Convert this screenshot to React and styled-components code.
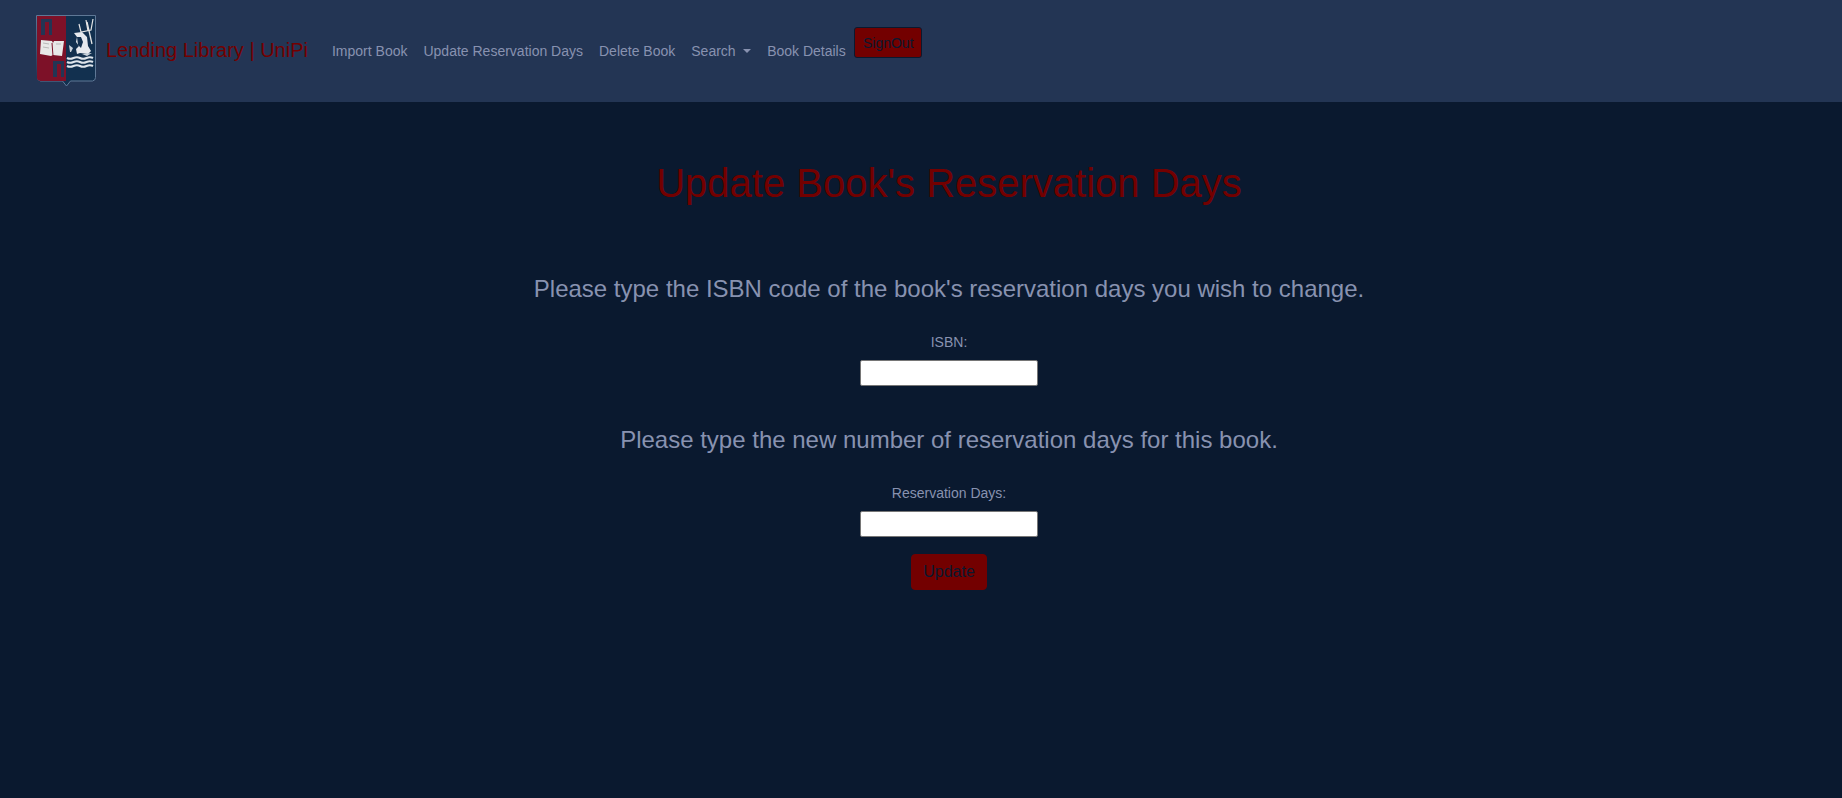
import React from 'react';
import styled, { createGlobalStyle } from 'styled-components';

const Global = createGlobalStyle`
html, body { margin: 0; padding: 0; background: #0a192f; }
body { font-family: "Liberation Sans", Arial, sans-serif; }
* { box-sizing: border-box; }
`;

const Page = styled.div`
min-height: 798px;
background: #0a192f;
`;

const Nav = styled.nav`
display: flex;
align-items: flex-start;
height: 102px;
padding: 15px 0 0 36px;
background: #233554;
`;

const Brand = styled.a`
display: flex;
align-items: center;
height: 70px;
gap: 10px;
margin-right: 16px;
color: #730000;
font-size: 20px;
white-space: nowrap;
`;

const CrestSvg = styled.svg`
align-self: flex-start;
flex: none;
`;

const Links = styled.ul`
display: flex;
list-style: none;
margin: 0;
padding: 0;
`;

const LinkItem = styled.li`
margin-top: 26px;
padding: 0 8px;
color: #8892b0;
font-size: 14px;
line-height: 21px;
white-space: nowrap;
`;

const Caret = styled.span`
display: inline-block;
margin-left: 7.5px;
vertical-align: 3px;
border-top: 4px solid #8892b0;
border-left: 4px solid transparent;
border-right: 4px solid transparent;
`;

const SignOut = styled.button`
width: 68px;
height: 31px;
margin: 12px 0 0 0.5px;
padding: 0;
background: #730000;
border: 1px solid #0a192f;
border-radius: 3px;
color: #0a192f;
font-family: inherit;
font-size: 14px;
`;

const Main = styled.main`
display: flex;
flex-direction: column;
align-items: center;
padding: 57px 0 0 56px;
`;

const Title = styled.h1`
margin: 0;
color: #730000;
font-size: 40px;
font-weight: 400;
line-height: 48px;
`;

const Prompt = styled.h4`
margin: ${(p) => p.$top}px 0 0;
color: #8892b0;
font-size: 24px;
font-weight: 400;
line-height: 29px;
`;

const Field = styled.label`
display: flex;
flex-direction: column;
align-items: center;
margin-top: 29px;
color: #8892b0;
font-size: 14px;
line-height: 21px;
`;

const Input = styled.input`
display: block;
width: 178px;
height: 26px;
margin-top: 7px;
padding: 1px 2px;
background: #fff;
border: 1px solid #767676;
border-radius: 2px;
`;

const Update = styled.button`
width: 76px;
height: 36px;
margin-top: 17px;
padding: 0;
background: #730000;
border: 1px solid #730000;
border-radius: 4px;
color: #0a192f;
font-family: inherit;
font-size: 16px;
`;

function Crest() {
  return (
    <CrestSvg width="60" height="72" viewBox="0 0 60 72">
      <path d="M.5.500h59v62q0 3-3 3.500h-22l-4 5-4-5h-22q-3-.5-3-3.500z" fill="#12304f" stroke="#5f7896" />
      <path d="M1 1h29v65h-25q-4-.5-4-3z" fill="#7d1128" />
      <path d="M5 4h11v16h-3v-13h-4v13h-4z" fill="#233554" />
      <path d="M17 46h11v16h-3v-13h-4v13h-4z" fill="#233554" />
      <path d="M5 25l11 1 1 2 1-2 10 0-2 15-9-1-2 1-11-2z" fill="#e8e8e8" />
      <path d="M16 28l1 13" stroke="#7d1128" fill="none" />
      <path d="M7 28l6 1M7 32l6 1M20 29l5 0" stroke="#b9b9b9" fill="none" />
      <path d="M51 7l5 22" stroke="#e6e6e6" strokeWidth="1.300" fill="none" />
      <path d="M43 9l2 8 10-2 2-11M50 5l2 11" stroke="#e6e6e6" strokeWidth="1.200" fill="none" />
      <path d="M38 18l8-1 5 5 1 9 3 5-3 3-8-1-3 1-1-5 3-3-3-4 1-5z" fill="#e6e9ee" />
      <path d="M41 22l4 0 2 5-2 6-3-3z" fill="#12304f" />
      <path d="M33 30l4 3-2 4-1 0zM46 39l10-1-5 3z" fill="#c9d2dc" />
      <path d="M31 43q3 1.500 6.500 0t6.500 0 6.500 0 6.500 0M31 47q3 1.500 6.500 0t6.500 0 6.500 0 6.500 0M31 51q3 1.500 6.500 0t6.500 0 6.500 0 6.500 0" stroke="#dfe5ec" strokeWidth="2.200" fill="none" />
    </CrestSvg>
  );
}

export default function App() {
  return (
    <Page>
      <Global />
      <Nav>
        <Brand>
          <Crest />
          Lending Library | UniPi
        </Brand>
        <Links>
          <LinkItem>Import Book</LinkItem>
          <LinkItem>Update Reservation Days</LinkItem>
          <LinkItem>Delete Book</LinkItem>
          <LinkItem>Search<Caret /></LinkItem>
          <LinkItem>Book Details</LinkItem>
        </Links>
        <SignOut>SignOut</SignOut>
      </Nav>
      <Main>
        <Title>Update Book's Reservation Days</Title>
        <Prompt $top={67}>Please type the ISBN code of the book's reservation days you wish to change.</Prompt>
        <Field>
          ISBN:
          <Input type="text" />
        </Field>
        <Prompt $top={39}>Please type the new number of reservation days for this book.</Prompt>
        <Field>
          Reservation Days:
          <Input type="text" />
        </Field>
        <Update>Update</Update>
      </Main>
    </Page>
  );
}
